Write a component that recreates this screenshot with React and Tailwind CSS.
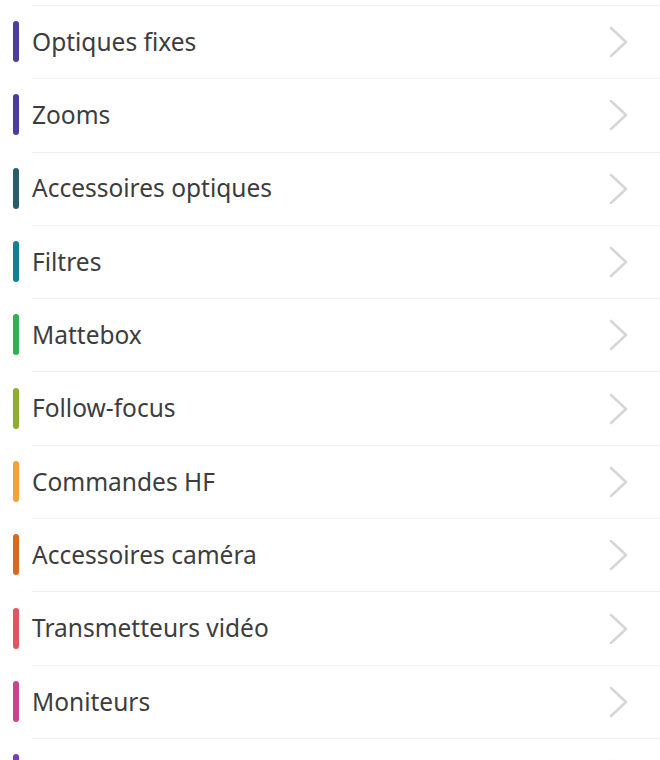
import React from "react";

const items = [
  { label: "Optiques fixes", color: "bg-[#4b3c9e]" },
  { label: "Zooms", color: "bg-[#4b3c9e]" },
  { label: "Accessoires optiques", color: "bg-[#2b5c6b]" },
  { label: "Filtres", color: "bg-[#127f94]" },
  { label: "Mattebox", color: "bg-[#30b050]" },
  { label: "Follow-focus", color: "bg-[#8fae30]" },
  { label: "Commandes HF", color: "bg-[#f4a23a]" },
  { label: "Accessoires caméra", color: "bg-[#d9691f]" },
  { label: "Transmetteurs vidéo", color: "bg-[#e05560]" },
  { label: "Moniteurs", color: "bg-[#c8448c]" },
  { label: "", color: "bg-[#7b3cb8]" },
];

function Chevron() {
  return (
    <svg width="20" height="32" viewBox="0 0 20 32" fill="none">
      <polyline
        points="2,2 17,16 2,30"
        stroke="#d6d6d6"
        strokeWidth="2.6"
        strokeLinecap="round"
        strokeLinejoin="round"
      />
    </svg>
  );
}

export default function App() {
  return (
    <div className="w-[660px] h-[760px] overflow-hidden bg-white" style={{ fontFamily: '"Noto Sans", "Open Sans", sans-serif' }}>
      <div className="h-[5px]" />
      {items.map((it, i) => (
        <div key={i} className="flex h-[73.3px]">
          <div className="w-[32px] flex items-center pl-[13px]">
            <div className={`w-[6px] h-[41px] rounded-full ${it.color}`} />
          </div>
          <div className="flex-1 border-t border-[#f0f0f0] flex items-center justify-between pr-[31px]">
            <span className="text-[24.5px] text-[#3d3d3d] leading-none">{it.label}</span>
            <Chevron />
          </div>
        </div>
      ))}
    </div>
  );
}
